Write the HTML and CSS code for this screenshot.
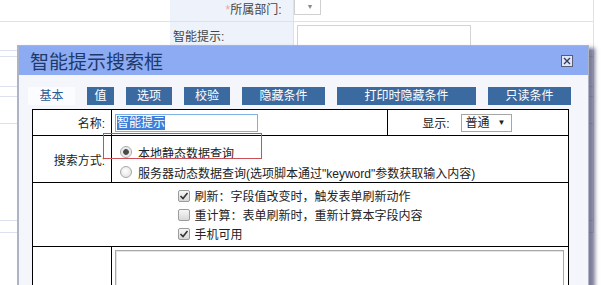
FILE: index.html
```html
<!DOCTYPE html>
<html lang="zh-CN">
<head>
    <meta charset="UTF-8">
    <title>智能提示搜索框</title>
    <link rel="stylesheet" href="styles.css">
</head>
<body>

    <table class="page">
        <tr class="row-a">
            <td class="blank"></td>
            <td class="lbl lbl-right"><span class="req">*</span>所属部门:</td>
            <td class="val"><span class="mini-select">&#9660;</span></td>
        </tr>
        <tr class="row-b">
            <td class="blank"></td>
            <td class="lbl">智能提示:</td>
            <td class="val"><div class="page-input"></div></td>
        </tr>
        <tr class="row-c"><td class="blank"></td><td class="lbl"></td><td class="val"></td></tr>
        <tr class="row-d"><td class="blank"></td><td class="lbl"></td><td class="val"></td></tr>
        <tr class="row-e"><td class="blank"></td><td class="lbl"></td><td class="val"></td></tr>
        <tr class="row-f"><td class="blank"></td><td class="lbl"></td><td class="val"></td></tr>
        <tr class="row-g"><td class="blank"></td><td class="lbl"></td><td class="val"></td></tr>
        <tr class="row-h"><td class="blank"></td><td class="lbl"></td><td class="val"></td></tr>
    </table>

    <div class="dialog">
        <div class="dialog-title">
            <span>智能提示搜索框</span>
            <svg class="close" width="12" height="12" viewBox="0 0 12 12">
                <rect x="0.5" y="0.5" width="11" height="11" fill="#dfe6f8" stroke="#5a5a7a"/>
                <path d="M3 3 L9 9 M9 3 L3 9" stroke="#3a3a5c" stroke-width="1.4"/>
            </svg>
        </div>
        <div class="dialog-body">
            <ul class="tabs">
                <li class="tab active w47">基本</li>
                <li class="tab w27">值</li>
                <li class="tab w46">选项</li>
                <li class="tab w46">校验</li>
                <li class="tab w83">隐藏条件</li>
                <li class="tab w139">打印时隐藏条件</li>
                <li class="tab w83">只读条件</li>
            </ul>

            <table class="form">
                <colgroup>
                    <col class="c1"><col class="c2"><col class="c3"><col class="c4">
                </colgroup>
                <tr class="r1">
                    <td class="label">名称:</td>
                    <td class="cell"><div class="name-input"><span class="sel">智能提示</span></div></td>
                    <td class="label show-label">显示:</td>
                    <td class="cell show-cell"><div class="select">普通<span class="arrow">&#9660;</span></div></td>
                </tr>
                <tr class="r2">
                    <td class="label">搜索方式:</td>
                    <td class="cell radios" colspan="3">
                        <div class="opt"><span class="radio on"></span>本地静态数据查询</div>
                        <div class="opt"><span class="radio"></span>服务器动态数据查询(选项脚本通过"keyword"参数获取输入内容)</div>
                    </td>
                </tr>
                <tr class="r3">
                    <td class="checks" colspan="4">
                        <div class="check-list">
                            <div class="opt"><span class="checkbox"><svg width="10" height="10" viewBox="0 0 10 10"><path d="M1.5 5 L4 7.5 L8.5 2" fill="none" stroke="#333" stroke-width="1.6"/></svg></span>刷新：字段值改变时，触发表单刷新动作</div>
                            <div class="opt"><span class="checkbox"></span>重计算：表单刷新时，重新计算本字段内容</div>
                            <div class="opt"><span class="checkbox"><svg width="10" height="10" viewBox="0 0 10 10"><path d="M1.5 5 L4 7.5 L8.5 2" fill="none" stroke="#333" stroke-width="1.6"/></svg></span>手机可用</div>
                        </div>
                    </td>
                </tr>
                <tr class="r4">
                    <td class="label"></td>
                    <td class="cell" colspan="3"><div class="textarea"></div></td>
                </tr>
            </table>
        </div>
    </div>

    <div class="mark"></div>

</body>
</html>
```

FILE: styles.css
```css
*{
    margin: 0;
    padding: 0;
    box-sizing: border-box;
}

body{
    width: 602px;
    height: 285px;
    overflow: hidden;
    position: relative;
    background-color: #fff;
    font-family: "Liberation Sans", "Noto Sans CJK SC", sans-serif;
    font-size: 12px;
    color: #222;
}

/* page behind the dialog */

table.page{
    width: 594px;
    border-collapse: collapse;
}

table.page td{
    border-bottom: 1px solid #dbe1ee;
    padding: 0;
}

table.page td.blank{
    width: 170px;
}

table.page td.lbl{
    width: 123px;
    background-color: #eef2fa;
    border-right: 1px solid #dbe1ee;
    color: #444;
    padding-left: 3px;
}

table.page td.lbl-right{
    text-align: right;
    padding-right: 11px;
    padding-bottom: 3px;
}

table.page td.val{
    border-right: 1px solid #dbe1ee;
}

.row-a td{ height: 21px; }
.row-b td{ height: 29px; }
.row-c td{ height: 6px; }
.row-d td{ height: 30px; }
.row-e td{ height: 10px; }
.row-f td{ height: 27px; }
.row-g td{ height: 97px; }
.row-h td{ height: 12px; }

.req{
    color: #f0a0a0;
}

.mini-select{
    display: block;
    width: 27px;
    height: 15px;
    margin-top: -6px;
    border: 1px solid #d0d0d0;
    border-top: none;
    color: #888;
    font-size: 7px;
    line-height: 14px;
    text-align: right;
    padding-right: 6px;
}

.page-input{
    width: 174px;
    height: 21px;
    margin-left: 3px;
    border: 1px solid #d4d4d4;
}

/* dialog */

.dialog{
    position: absolute;
    left: 17px;
    top: 45px;
    width: 572px;
    height: 260px;
    border: 1px solid #aeb3c6;
    border-left-width: 2px;
    background-color: #f5f6fb;
    box-shadow: 6px 3px 4px rgba(70, 70, 110, .7);
}

.dialog-title{
    height: 29px;
    background-color: #8cabf3;
    color: #1d3a6b;
    font-family: "Noto Sans CJK SC", sans-serif;
    font-size: 19px;
    display: flex;
    align-items: center;
    justify-content: space-between;
    padding: 0 15px 0 11px;
}

.dialog-body{
    padding: 12px 0 0 13px;
}

.tabs{
    list-style-type: none;
    display: flex;
    gap: 12px;
    margin-left: -4px;
    margin-bottom: 4px;
}

.tab{
    height: 18px;
    line-height: 18px;
    text-align: center;
    background-color: #3b6aa1;
    color: #fff;
}

.tab.active{
    background-color: #fbfcff;
    color: #2c5c94;
}

.w27{ width: 27px; }
.w46{ width: 46px; }
.w47{ width: 47px; }
.w83{ width: 83px; }
.w139{ width: 139px; }

table.form{
    width: 536px;
    border-collapse: collapse;
    table-layout: fixed;
    background-color: #fff;
}

table.form td{
    border: 1px solid #000;
    padding: 0;
}

col.c1{ width: 79px; }
col.c2{ width: 276px; }
col.c3{ width: 72px; }
col.c4{ width: 109px; }

.r1 td{ height: 26px; }
.r2 td{ height: 46px; }
.r3 td{ height: 64px; }
.r4 td{ height: 60px; vertical-align: top; }

table.form td.label{
    text-align: right;
    padding-right: 6px;
}

table.form td.show-label{
    border-right: none;
    padding-right: 10px;
}

table.form td.show-cell{
    border-left: none;
    padding-left: 1px;
}

.name-input{
    width: 143px;
    height: 18px;
    margin-left: 3px;
    border: 1px solid #7fb0e4;
    padding-left: 1px;
    line-height: 16px;
}

.sel{
    background-color: #3d7fd8;
    color: #fff;
}

.select{
    width: 51px;
    height: 18px;
    border: 1px solid #a6a6a6;
    background-color: #fff;
    padding-left: 4px;
    line-height: 16px;
    display: flex;
    justify-content: space-between;
}

.arrow{
    font-size: 8px;
    padding-right: 5px;
}

table.form td.radios{
    vertical-align: top;
    padding: 6px 0 0 8px;
}

.opt{
    display: flex;
    align-items: center;
    gap: 6px;
    height: 20px;
}

.radio{
    width: 12px;
    height: 12px;
    border-radius: 50%;
    border: 1px solid #a8a8a8;
    background: radial-gradient(circle at 45% 40%, #fff, #dcdcdc);
}

.radio.on{
    background: radial-gradient(circle, #4a4a4a 0 2.5px, #e6e6e6 3.2px, #f8f8f8 6px);
}

table.form td.checks{
    vertical-align: top;
    padding-top: 3px;
    text-align: center;
}

.check-list{
    display: inline-block;
    text-align: left;
}

.check-list .opt{
    height: 19px;
    gap: 4px;
}

.checkbox{
    width: 12px;
    height: 12px;
    border: 1px solid #9c9c9c;
    border-radius: 2px;
    background: linear-gradient(#f6f6f6, #d8d8d8);
    display: flex;
    align-items: center;
    justify-content: center;
}

.textarea{
    margin: 3px 0 0 3px;
    width: 449px;
    height: 60px;
    border: 1px solid #a8a8a8;
    box-shadow: inset 1px 1px 0 #e4e4e4;
}

.mark{
    position: absolute;
    left: 103px;
    top: 133px;
    width: 159px;
    height: 26px;
    border: 1px solid #cc4e57;
}
```
